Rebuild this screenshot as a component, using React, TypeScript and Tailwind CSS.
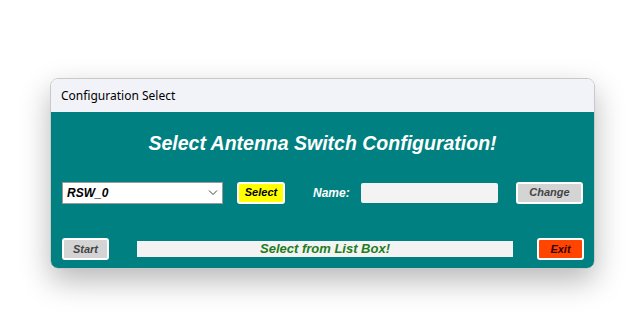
import React from "react";

export default function App() {
  const arial = { fontFamily: '"Liberation Sans", Arial, sans-serif' } as React.CSSProperties;
  return (
    <div className="w-[639px] h-[332px] bg-white relative overflow-hidden">
      <div className="absolute left-[50px] top-[78px] w-[545px] h-[191px] rounded-[8px] border border-[#c9c9c9] overflow-hidden shadow-[0_12px_30px_rgba(0,0,0,0.28)] flex flex-col">
        <div className="h-[33px] bg-[#f2f3f9] flex items-center pl-[10px] text-[12px] text-black" style={{ fontFamily: '"Noto Sans", "Open Sans", sans-serif' }}>
          Configuration Select
        </div>
        <div className="flex-1 bg-[#008080] flex flex-col" style={arial}>
          <div className="pt-[19px] h-[43px] leading-[24px] text-center text-white font-bold italic text-[19.5px]">
            Select Antenna Switch Configuration!
          </div>
          <div className="mt-[26px] flex items-center pl-[11px] h-[23px]">
            <div className="w-[161px] h-[22px] bg-white border border-[#9a9a9a] flex items-center justify-between pl-[4px] pr-[4px]">
              <span className="font-bold italic text-[12px] text-black">RSW_0</span>
              <svg width="10" height="6" viewBox="0 0 10 6" fill="none" stroke="#444" strokeWidth="1">
                <path d="M1 0.5 L5 4.5 L9 0.5" />
              </svg>
            </div>
            <button className="ml-[14px] w-[48px] h-[22px] bg-[#ffff00] border-2 border-white rounded-[3px] font-bold italic text-[11px] text-black flex items-center justify-center">
              Select
            </button>
            <span className="ml-[28px] w-[38px] font-bold italic text-[12px] text-white">Name:</span>
            <div className="ml-[10px] w-[137px] h-[20px] bg-[#f3f3f3] rounded-[2px]"></div>
            <button className="ml-[18px] w-[67px] h-[22px] bg-[#d4d4d4] border-2 border-white rounded-[3px] font-bold italic text-[11px] text-[#444] flex items-center justify-center">
              Change
            </button>
          </div>
          <div className="mt-[34px] flex items-center pl-[11px] h-[22px]">
            <button className="w-[47px] h-[22px] bg-[#d4d4d4] border-2 border-white rounded-[3px] font-bold italic text-[11px] text-[#444] flex items-center justify-center">
              Start
            </button>
            <div className="ml-[28px] w-[376px] h-[16px] bg-[#f3f3f3] flex items-center justify-center font-bold italic text-[13px] text-[#1e7d1e]">
              Select from List Box!
            </div>
            <button className="ml-[24px] w-[47px] h-[22px] bg-[#ff4500] border-2 border-white rounded-[3px] font-bold italic text-[11px] text-[#3a0000] flex items-center justify-center">
              Exit
            </button>
          </div>
        </div>
      </div>
    </div>
  );
}
